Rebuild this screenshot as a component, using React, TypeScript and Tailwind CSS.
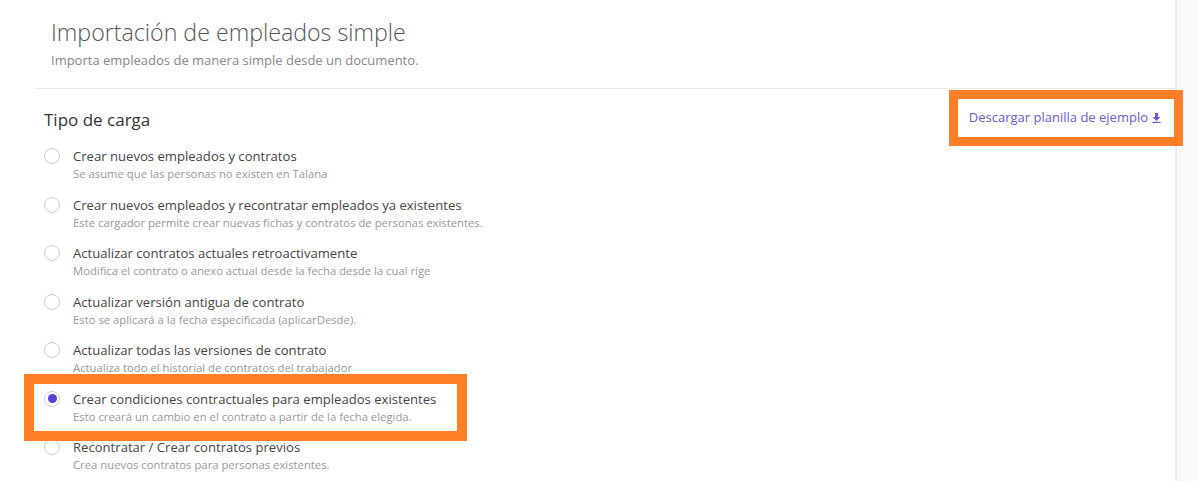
import React from "react";

const options = [
  { label: "Crear nuevos empleados y contratos", desc: "Se asume que las personas no existen en Talana" },
  { label: "Crear nuevos empleados y recontratar empleados ya existentes", desc: "Este cargador permite crear nuevas fichas y contratos de personas existentes." },
  { label: "Actualizar contratos actuales retroactivamente", desc: "Modifica el contrato o anexo actual desde la fecha desde la cual rige" },
  { label: "Actualizar versión antigua de contrato", desc: "Esto se aplicará a la fecha especificada (aplicarDesde)." },
  { label: "Actualizar todas las versiones de contrato", desc: "Actualiza todo el historial de contratos del trabajador" },
  { label: "Crear condiciones contractuales para empleados existentes", desc: "Esto creará un cambio en el contrato a partir de la fecha elegida." },
  { label: "Recontratar / Crear contratos previos", desc: "Crea nuevos contratos para personas existentes." },
];

const Radio = ({ checked }: { checked: boolean }) => (
  <span className="flex h-4 w-4 shrink-0 items-center justify-center rounded-full border-[1.5px] border-[#cdcdcd] bg-white">
    {checked && <span className="h-[9px] w-[9px] rounded-full bg-[#5a3fd6]" />}
  </span>
);

const App = () => {
  const selected = 5;
  return (
    <div className="relative flex h-[481px] w-[1198px] overflow-hidden bg-[#fafafa] font-['Open_Sans',sans-serif]">
      <div className="w-[1177px] shrink-0 border-r-2 border-[#ececec] bg-white">
        <div className="pl-[51px] pt-[17px]">
          <h1 className="text-[23.2px] font-light leading-[30px] text-[#555]">Importación de empleados simple</h1>
          <p className="mt-[4px] text-[13px] leading-[18px] text-[#888]">Importa empleados de manera simple desde un documento.</p>
        </div>
        <div className="ml-[35px] mt-[19px] border-t border-[#e8e8e8]" />
        <div className="flex justify-between pl-[44px] pr-[14px]">
          <div>
            <h2 className="mt-[19px] text-[17px] font-medium leading-[24px] text-[#333]">Tipo de carga</h2>
            <div className="mt-[14px]">
              {options.map((o, i) => (
                <label key={i} className="flex h-[48.5px] cursor-pointer items-start gap-[13px]">
                  <span className="pt-[2px]"><Radio checked={i === selected} /></span>
                  <span className="flex flex-col">
                    <span className="text-[13.1px] leading-[20px] text-[#444]">{o.label}</span>
                    <span className="text-[11.3px] leading-[16px] text-[#999]">{o.desc}</span>
                  </span>
                </label>
              ))}
            </div>
          </div>
          <a href="#" className="mt-[19px] flex h-[20px] items-center gap-[4px] text-[13px] text-[#6b57e0]">
            Descargar planilla de ejemplo
            <svg width="9" height="10" viewBox="0 0 9 10" fill="currentColor">
              <path d="M3 0h3v4h2.5L4.5 8 0.5 4H3z" />
              <rect x="0.5" y="8.8" width="8" height="1.2" />
            </svg>
          </a>
        </div>
      </div>
      <div className="pointer-events-none absolute left-[949px] top-[90px] h-[56px] w-[234px] border-[9px] border-[#ff7f27]" />
      <div className="pointer-events-none absolute left-[24px] top-[374px] h-[67px] w-[443px] border-[10px] border-[#ff7f27]" />
    </div>
  );
};

export default App;
